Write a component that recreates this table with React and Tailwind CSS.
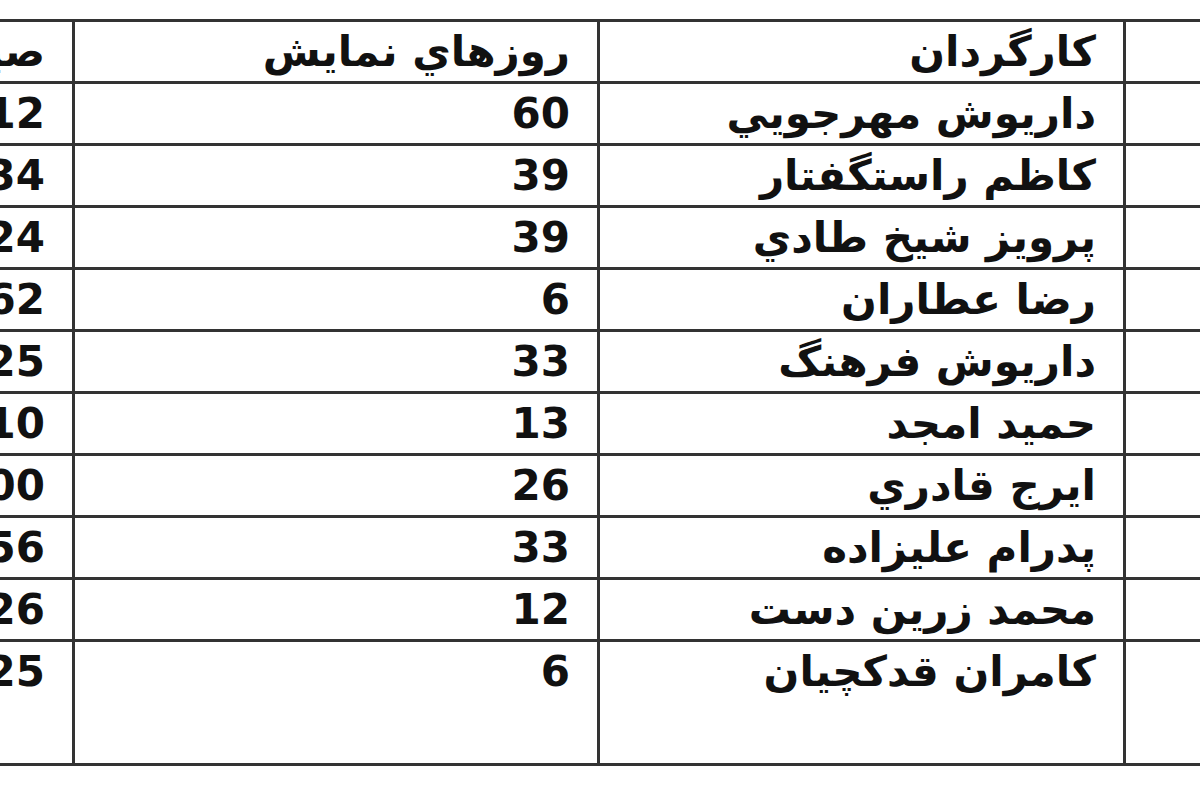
import React from "react";

const rows = [
  { director: "داريوش مهرجويي", days: "60", sale: "2561412" },
  { director: "کاظم راستگفتار", days: "39", sale: "1836534" },
  { director: "پرويز شيخ طادي", days: "39", sale: "1524024" },
  { director: "رضا عطاران", days: "6", sale: "945762" },
  { director: "داريوش فرهنگ", days: "33", sale: "1152325" },
  { director: "حميد امجد", days: "13", sale: "652210" },
  { director: "ايرج قادري", days: "26", sale: "432200" },
  { director: "پدرام عليزاده", days: "33", sale: "388456" },
  { director: "محمد زرين دست", days: "12", sale: "321126" },
  { director: "کامران قدکچيان", days: "6", sale: "156525" },
];

const cell =
  "border-[3px] border-[#333] align-top pr-[27px] whitespace-nowrap overflow-hidden text-[42px] leading-[59px]";

const App = () => {
  return (
    <div
      dir="rtl"
      className="w-[1200px] h-[800px] overflow-hidden bg-white pt-[19px] text-[#111] font-['DejaVu_Sans',sans-serif] font-bold"
    >
      <table className="border-collapse table-fixed w-[1426px] -mr-[226px]">
        <colgroup>
          <col className="w-[300px]" />
          <col className="w-[526px]" />
          <col className="w-[525px]" />
          <col className="w-[75px]" />
        </colgroup>
        <thead>
          <tr className="h-[60px]">
            {/* film column, cut off at the right edge */}
            <th className={`${cell} text-right`}></th>
            <th className={`${cell} text-right`}>کارگردان</th>
            <th className={`${cell} text-right`}>روزهاي نمايش</th>
            <th className={`${cell} text-right`}>صيد فروش</th>
          </tr>
        </thead>
        <tbody>
          {rows.map((r, i) => (
            <tr
              key={r.director}
              className={i === rows.length - 1 ? "h-[124px]" : "h-[60px]"}
            >
              <td className={cell}></td>
              <td className={cell}>{r.director}</td>
              <td className={cell}>{r.days}</td>
              <td className={cell}>{r.sale}</td>
            </tr>
          ))}
        </tbody>
      </table>
    </div>
  );
};

export default App;
